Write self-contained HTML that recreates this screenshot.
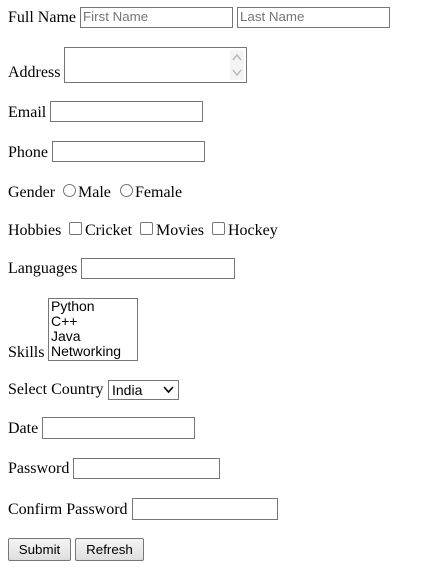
<!DOCTYPE html>
<html><head><style>
body{margin:0;width:423px;height:582px;background:#fff;font-family:"Liberation Serif",serif;font-size:16px;color:#000;position:relative;overflow:hidden}
.t{position:absolute;line-height:20px;white-space:nowrap;margin-top:1px}
.b{position:absolute;box-sizing:border-box;border:1px solid #767676;background:#fff;font-family:"Liberation Sans",sans-serif;font-size:13.33px;color:#757575;padding:1px 2px;line-height:16px}
.r{position:absolute;width:11px;height:11px;border:1px solid #767676;border-radius:50%;box-sizing:border-box}
.c{position:absolute;width:13px;height:13px;border:1px solid #767676;border-radius:2px;box-sizing:border-box}
.btn{position:absolute;box-sizing:border-box;border:1px solid #767676;background:linear-gradient(#f4f4f4,#dedede);font-family:"Liberation Sans",sans-serif;font-size:13.33px;text-align:center;line-height:21px;border-radius:2px}
</style></head><body>
<div class="t" style="left:8px;top:7px">Full Name</div>
<div class="b" style="left:80px;top:7px;width:153px;height:21px">First Name</div>
<div class="b" style="left:237px;top:7px;width:153px;height:21px">Last Name</div>

<div class="t" style="left:8px;top:62px">Address</div>
<div class="b" style="left:64px;top:47px;width:183px;height:36px">
<svg style="position:absolute;right:2px;top:2px" width="14" height="30"><rect width="14" height="30" fill="#f4f4f4"/><path d="M3 10 L7 5 L11 10" stroke="#bbb" fill="none" stroke-width="1.5"/><path d="M3 20 L7 25 L11 20" stroke="#bbb" fill="none" stroke-width="1.5"/></svg></div>

<div class="t" style="left:8px;top:102px">Email</div>
<div class="b" style="left:50px;top:101px;width:153px;height:21px"></div>

<div class="t" style="left:8px;top:142px">Phone</div>
<div class="b" style="left:52px;top:141px;width:153px;height:21px"></div>

<div class="t" style="left:8px;top:182px">Gender</div>
<div class="r" style="left:63px;top:184px;width:13px;height:13px"></div>
<div class="t" style="left:78px;top:182px">Male</div>
<div class="r" style="left:120px;top:184px;width:13px;height:13px"></div>
<div class="t" style="left:135px;top:182px">Female</div>

<div class="t" style="left:8px;top:220px">Hobbies</div>
<div class="c" style="left:69px;top:222px"></div>
<div class="t" style="left:85px;top:220px">Cricket</div>
<div class="c" style="left:140px;top:222px"></div>
<div class="t" style="left:156px;top:220px">Movies</div>
<div class="c" style="left:212px;top:222px"></div>
<div class="t" style="left:228px;top:220px">Hockey</div>

<div class="t" style="left:8px;top:258px">Languages</div>
<div class="b" style="left:81px;top:258px;width:154px;height:21px"></div>

<div class="t" style="left:8px;top:342px">Skills</div>
<div class="b" style="left:48px;top:298px;width:90px;height:63px;color:#000;padding:0 2px;line-height:15px;font-size:14px">Python<br>C++<br>Java<br>Networking</div>

<div class="t" style="left:8px;top:379px">Select Country</div>
<div class="b" style="left:108px;top:380px;width:71px;height:20px;color:#000;padding:0 3px;line-height:18px;font-size:14px">India
<svg style="position:absolute;right:4px;top:5px" width="11" height="8"><path d="M1 1 L5.5 6 L10 1" stroke="#000" stroke-width="1.6" fill="none"/></svg></div>

<div class="t" style="left:8px;top:418px">Date</div>
<div class="b" style="left:42px;top:417px;width:153px;height:22px"></div>

<div class="t" style="left:8px;top:458px">Password</div>
<div class="b" style="left:73px;top:458px;width:147px;height:21px"></div>

<div class="t" style="left:8px;top:499px">Confirm Password</div>
<div class="b" style="left:132px;top:498px;width:146px;height:22px"></div>

<div class="btn" style="left:8px;top:538px;width:63px;height:23px">Submit</div>
<div class="btn" style="left:75px;top:538px;width:69px;height:23px">Refresh</div>
</body></html>
